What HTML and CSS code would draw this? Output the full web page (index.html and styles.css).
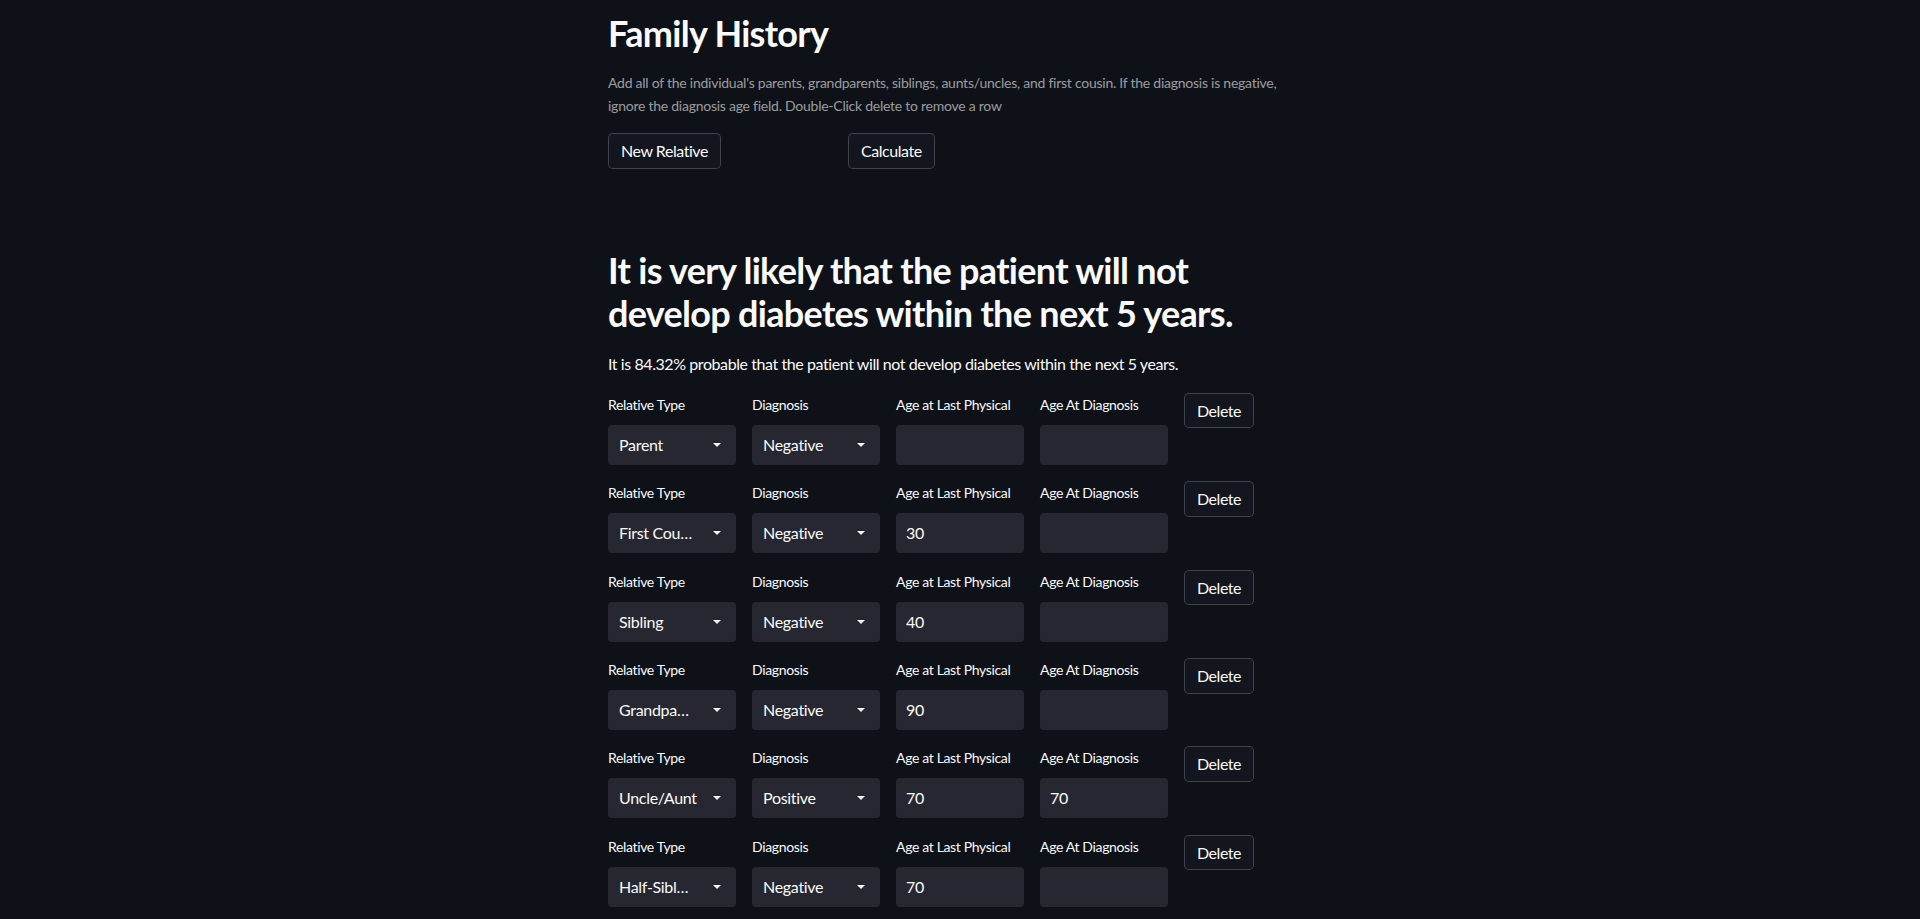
FILE: index.html
```html
<!DOCTYPE html>
<html lang="en">
<head>
<meta charset="utf-8">
<title>Family History</title>
<link rel="stylesheet" href="styles.css">
</head>
<body>
<main class="block">
  <h2 class="title">Family History</h2>
  <p class="caption">Add all of the individual's parents, grandparents, siblings, aunts/uncles, and first cousin. If the diagnosis is negative, ignore the diagnosis age field. Double-Click delete to remove a row</p>
  <div class="cols3">
    <div class="col"><button class="btn">New Relative</button></div>
    <div class="col"><button class="btn">Calculate</button></div>
    <div class="col"></div>
  </div>
  <h2 class="result">It is very likely that the patient will not develop diabetes within the next 5 years.</h2>
  <p class="prob">It is 84.32% probable that the patient will not develop diabetes within the next 5 years.</p>

  <div class="row">
    <div class="field"><label class="lbl">Relative Type</label><div class="select"><span class="val">Parent</span><svg class="arrow" width="8" height="4" viewBox="0 0 8 4"><path d="M0 0h8L4 4z"/></svg></div></div>
    <div class="field"><label class="lbl">Diagnosis</label><div class="select"><span class="val">Negative</span><svg class="arrow" width="8" height="4" viewBox="0 0 8 4"><path d="M0 0h8L4 4z"/></svg></div></div>
    <div class="field"><label class="lbl">Age at Last Physical</label><input class="input" type="text" value=""></div>
    <div class="field"><label class="lbl">Age At Diagnosis</label><input class="input" type="text" value=""></div>
    <div class="field"><button class="btn">Delete</button></div>
  </div>

  <div class="row">
    <div class="field"><label class="lbl">Relative Type</label><div class="select"><span class="val">First Cou…</span><svg class="arrow" width="8" height="4" viewBox="0 0 8 4"><path d="M0 0h8L4 4z"/></svg></div></div>
    <div class="field"><label class="lbl">Diagnosis</label><div class="select"><span class="val">Negative</span><svg class="arrow" width="8" height="4" viewBox="0 0 8 4"><path d="M0 0h8L4 4z"/></svg></div></div>
    <div class="field"><label class="lbl">Age at Last Physical</label><input class="input" type="text" value="30"></div>
    <div class="field"><label class="lbl">Age At Diagnosis</label><input class="input" type="text" value=""></div>
    <div class="field"><button class="btn">Delete</button></div>
  </div>

  <div class="row">
    <div class="field"><label class="lbl">Relative Type</label><div class="select"><span class="val">Sibling</span><svg class="arrow" width="8" height="4" viewBox="0 0 8 4"><path d="M0 0h8L4 4z"/></svg></div></div>
    <div class="field"><label class="lbl">Diagnosis</label><div class="select"><span class="val">Negative</span><svg class="arrow" width="8" height="4" viewBox="0 0 8 4"><path d="M0 0h8L4 4z"/></svg></div></div>
    <div class="field"><label class="lbl">Age at Last Physical</label><input class="input" type="text" value="40"></div>
    <div class="field"><label class="lbl">Age At Diagnosis</label><input class="input" type="text" value=""></div>
    <div class="field"><button class="btn">Delete</button></div>
  </div>

  <div class="row">
    <div class="field"><label class="lbl">Relative Type</label><div class="select"><span class="val">Grandpa…</span><svg class="arrow" width="8" height="4" viewBox="0 0 8 4"><path d="M0 0h8L4 4z"/></svg></div></div>
    <div class="field"><label class="lbl">Diagnosis</label><div class="select"><span class="val">Negative</span><svg class="arrow" width="8" height="4" viewBox="0 0 8 4"><path d="M0 0h8L4 4z"/></svg></div></div>
    <div class="field"><label class="lbl">Age at Last Physical</label><input class="input" type="text" value="90"></div>
    <div class="field"><label class="lbl">Age At Diagnosis</label><input class="input" type="text" value=""></div>
    <div class="field"><button class="btn">Delete</button></div>
  </div>

  <div class="row">
    <div class="field"><label class="lbl">Relative Type</label><div class="select"><span class="val">Uncle/Aunt</span><svg class="arrow" width="8" height="4" viewBox="0 0 8 4"><path d="M0 0h8L4 4z"/></svg></div></div>
    <div class="field"><label class="lbl">Diagnosis</label><div class="select"><span class="val">Positive</span><svg class="arrow" width="8" height="4" viewBox="0 0 8 4"><path d="M0 0h8L4 4z"/></svg></div></div>
    <div class="field"><label class="lbl">Age at Last Physical</label><input class="input" type="text" value="70"></div>
    <div class="field"><label class="lbl">Age At Diagnosis</label><input class="input" type="text" value="70"></div>
    <div class="field"><button class="btn">Delete</button></div>
  </div>

  <div class="row">
    <div class="field"><label class="lbl">Relative Type</label><div class="select"><span class="val">Half-Sibl…</span><svg class="arrow" width="8" height="4" viewBox="0 0 8 4"><path d="M0 0h8L4 4z"/></svg></div></div>
    <div class="field"><label class="lbl">Diagnosis</label><div class="select"><span class="val">Negative</span><svg class="arrow" width="8" height="4" viewBox="0 0 8 4"><path d="M0 0h8L4 4z"/></svg></div></div>
    <div class="field"><label class="lbl">Age at Last Physical</label><input class="input" type="text" value="70"></div>
    <div class="field"><label class="lbl">Age At Diagnosis</label><input class="input" type="text" value=""></div>
    <div class="field"><button class="btn">Delete</button></div>
  </div>
</main>
</body>
</html>
```
FILE: styles.css
```css
html, body {
  margin: 0;
  padding: 0;
  background: #0e1117;
  color: #fafafa;
  font-family: "Lato", "Roboto", sans-serif;
  overflow: hidden;
}

.block {
  width: 704px;
  margin: 0 auto;
  padding-top: 12px;
}

.title,
.result {
  margin: 0;
  font-size: 36px;
  font-weight: 700;
  line-height: 43.2px;
  letter-spacing: -0.7px;
}

.caption {
  margin: 16px 0 0;
  font-size: 14px;
  line-height: 23px;
  letter-spacing: -0.25px;
  color: rgba(250, 250, 250, 0.6);
}

.cols3 {
  display: grid;
  grid-template-columns: repeat(3, 1fr);
  gap: 16px;
  margin-top: 16px;
}

.btn {
  display: inline-flex;
  align-items: center;
  justify-content: center;
  box-sizing: border-box;
  height: 35.6px;
  padding: 4px 12px;
  font-family: inherit;
  font-size: 16px;
  line-height: 25.6px;
  letter-spacing: -0.45px;
  color: #fafafa;
  background: #13161e;
  border: 1px solid rgba(250, 250, 250, 0.2);
  border-radius: 5px;
  cursor: pointer;
}

.result {
  margin-top: 80px;
}

.prob {
  margin: 16px 0 16px;
  font-size: 16px;
  line-height: 25.6px;
  letter-spacing: -0.42px;
}

.row {
  display: grid;
  grid-template-columns: repeat(5, 1fr);
  gap: 16px;
  margin-bottom: 16.4px;
}

.field {
  display: flex;
  flex-direction: column;
  min-width: 0;
  align-items: flex-start;
}

.lbl {
  display: block;
  height: 32px;
  font-size: 14px;
  line-height: 23.4px;
  letter-spacing: -0.35px;
  color: #fafafa;
}

.select,
.input {
  box-sizing: border-box;
  width: 100%;
  height: 40px;
  background: #262730;
  border: none;
  border-radius: 4px;
  color: #fafafa;
  font-family: inherit;
  font-size: 16px;
  letter-spacing: -0.3px;
}

.select {
  display: flex;
  align-items: center;
  gap: 10px;
  padding: 0 15px 0 11px;
}

.val {
  flex: 1;
  min-width: 0;
  overflow: hidden;
  white-space: nowrap;
  text-overflow: ellipsis;
  line-height: 40px;
}

.arrow {
  flex: none;
  fill: #fafafa;
}

.input {
  padding: 0 10px;
  outline: none;
  line-height: 40px;
}
```
